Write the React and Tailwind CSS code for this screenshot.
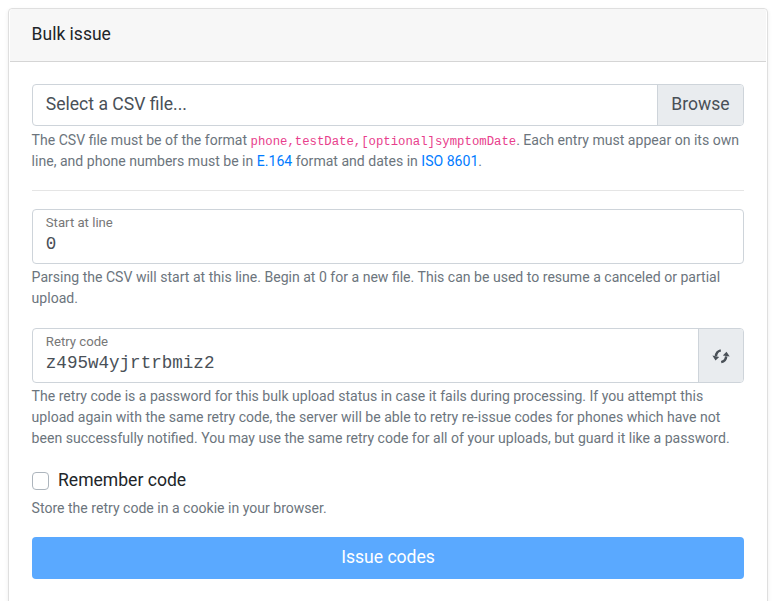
export default function App() {
  const help = "-ml-[0.4px] text-[14.07px] leading-[21px] text-[#6c757d] whitespace-nowrap";
  return (
    <div className="h-[601px] overflow-hidden bg-white px-2 pt-2 font-['Roboto',sans-serif] text-[17.5px] leading-[26px] text-[#212529]">
      <div className="h-[620px] w-[760px] rounded border border-[#dfdfdf] shadow-[0_2px_4px_rgba(0,0,0,0.075)]">
        <div className="mx-px h-[53px] rounded-t-[3px] border-b border-[#d5d5d5] bg-[#f7f7f7] px-[21.6px] pt-3">Bulk issue</div>
        <div className="px-[23px] pt-[22px]">
          <div className="flex h-[42px] w-[712px] overflow-hidden rounded border border-[#ced4da] leading-[39px] text-[#495057]">
            <div className="flex-1 pl-[12.8px] text-[17.57px]">Select a CSV file...</div>
            <div className="w-[86px] border-l border-[#ced4da] bg-[#e9ecef] text-center text-[17.57px]">Browse</div>
          </div>
          <div className={help + " mt-1"}>
            The CSV file must be of the format <code className="font-['Liberation_Mono',monospace] text-[12.3px] leading-none text-[#e83e8c]">phone,testDate,[optional]symptomDate</code>. Each entry must appear on its own<br />
            line, and phone numbers must be in <a className="text-[#007bff]">E.164</a> format and dates in <a className="text-[#007bff]">ISO 8601</a>.
          </div>
          <hr className="mt-[18px] mb-[18px] w-[712px] border-[#e5e5e5]" />
          <div className="h-[55px] w-[712px] rounded border border-[#ced4da] pl-[12.8px] pt-[3px] text-[#495057]">
            <div className="text-[13.18px] leading-5 text-[#777]">Start at line</div>
            <div className="font-['Liberation_Mono',monospace] text-[17.57px] leading-[22px]">0</div>
          </div>
          <div className={help + " mt-[3px]"}>Parsing the CSV will start at this line. Begin at 0 for a new file. This can be used to resume a canceled or partial<br />upload.</div>
          <div className="mt-[19px] flex h-[55px] w-[712px] overflow-hidden rounded border border-[#ced4da] text-[#495057]">
            <div className="flex-1 pl-[12.8px] pt-[3px]">
              <div className="text-[13.18px] leading-5 text-[#777]">Retry code</div>
              <div className="font-['Liberation_Mono',monospace] text-[17.57px] leading-[22px]">z495w4yjrtrbmiz2</div>
            </div>
            <div className="flex w-[45px] items-center justify-center border-l border-[#ced4da] bg-[#e9ecef]">
              <svg width="18" height="16" viewBox="0 0 18 16" fill="none" stroke="#495057" strokeWidth="2.5">
                <path d="M8.8 2.4C6.1 3 4.2 5 3.9 8.2M9.2 14.1c2.9-.6 4.7-2.6 5-5.8" />
                <path d="M.4 7.6 7.2 9 3.5 12.6zM10.8 7.4l3.7-3.7 3.2 4.8z" fill="#495057" stroke="none" />
              </svg>
            </div>
          </div>
          <div className={help + " mt-[3px]"}>The retry code is a password for this bulk upload status in case it fails during processing. If you attempt this<br />upload again with the same retry code, the server will be able to retry re-issue codes for phones which have not<br />been successfully notified. You may use the same retry code for all of your uploads, but guard it like a password.</div>
          <div className="mt-[18px] flex h-[26px] items-center">
            <div className="mt-[2px] mr-[9px] h-[18px] w-[17px] rounded border border-[#adb5bd]" />
            <span className="text-[17.57px]">Remember code</span>
          </div>
          <div className={help + " mt-[5px]"}>Store the retry code in a cookie in your browser.</div>
          <button className="mt-[18px] block h-[42px] w-[712px] rounded bg-[#5aa9ff] pb-[2px] text-center text-[17.57px] leading-10 text-white">Issue codes</button>
        </div>
      </div>
    </div>
  );
}
